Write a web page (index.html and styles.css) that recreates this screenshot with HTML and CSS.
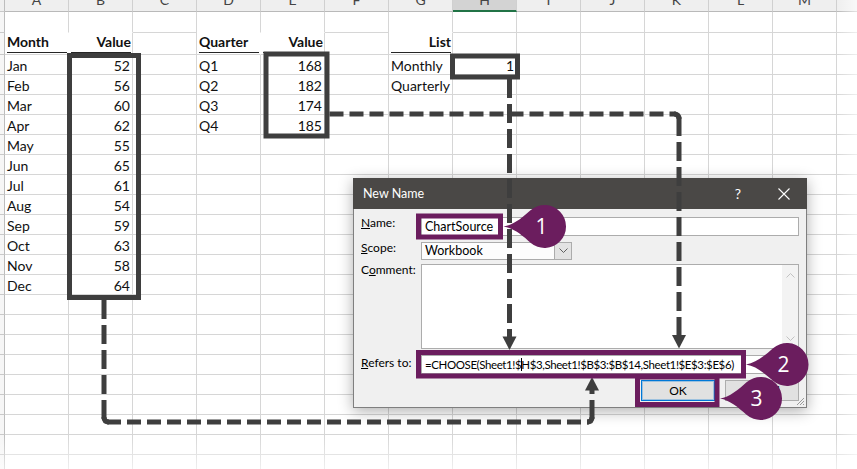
FILE: index.html
```html
<!DOCTYPE html>
<html>
<head>
<meta charset="utf-8">
<title>New Name</title>
<link rel="stylesheet" href="styles.css">
</head>
<body>
<div class="sheet">
  <div class="row hdr"><i class="rh"></i><i>A</i><i>B</i><i>C</i><i>D</i><i>E</i><i>F</i><i>G</i><i class="sel">H</i><i>I</i><i>J</i><i>K</i><i>L</i><i>M</i><i>N</i></div>
  <div class="row r1"><i class="rh"></i><i class="nb"></i><i class="nb"></i><i></i><i class="nb"></i><i class="nb"></i><i></i><i class="nb"></i><i></i><i></i><i></i><i></i><i></i><i></i><i></i></div>
  <div class="row r2"><i class="rh"></i><i class="h nr"><b>Month</b></i><i class="h n"><b>Value</b></i><i></i><i class="h nr"><b>Quarter</b></i><i class="h n"><b>Value</b></i><i></i><i class="h n"><b>List</b></i><i></i><i></i><i></i><i></i><i></i><i></i><i></i></div>
  <div class="row"><i class="rh"></i><i>Jan</i><i class="n">52</i><i></i><i>Q1</i><i class="n">168</i><i></i><i>Monthly</i><i class="n">1</i><i></i><i></i><i></i><i></i><i></i><i></i></div>
  <div class="row"><i class="rh"></i><i>Feb</i><i class="n">56</i><i></i><i>Q2</i><i class="n">182</i><i></i><i>Quarterly</i><i></i><i></i><i></i><i></i><i></i><i></i><i></i></div>
  <div class="row"><i class="rh"></i><i>Mar</i><i class="n">60</i><i></i><i>Q3</i><i class="n">174</i><i></i><i></i><i></i><i></i><i></i><i></i><i></i><i></i><i></i></div>
  <div class="row"><i class="rh"></i><i>Apr</i><i class="n">62</i><i></i><i>Q4</i><i class="n">185</i><i></i><i></i><i></i><i></i><i></i><i></i><i></i><i></i><i></i></div>
  <div class="row"><i class="rh"></i><i>May</i><i class="n">55</i><i></i><i></i><i></i><i></i><i></i><i></i><i></i><i></i><i></i><i></i><i></i><i></i></div>
  <div class="row"><i class="rh"></i><i>Jun</i><i class="n">65</i><i></i><i></i><i></i><i></i><i></i><i></i><i></i><i></i><i></i><i></i><i></i><i></i></div>
  <div class="row"><i class="rh"></i><i>Jul</i><i class="n">61</i><i></i><i></i><i></i><i></i><i></i><i></i><i></i><i></i><i></i><i></i><i></i><i></i></div>
  <div class="row"><i class="rh"></i><i>Aug</i><i class="n">54</i><i></i><i></i><i></i><i></i><i></i><i></i><i></i><i></i><i></i><i></i><i></i><i></i></div>
  <div class="row"><i class="rh"></i><i>Sep</i><i class="n">59</i><i></i><i></i><i></i><i></i><i></i><i></i><i></i><i></i><i></i><i></i><i></i><i></i></div>
  <div class="row"><i class="rh"></i><i>Oct</i><i class="n">63</i><i></i><i></i><i></i><i></i><i></i><i></i><i></i><i></i><i></i><i></i><i></i><i></i></div>
  <div class="row"><i class="rh"></i><i>Nov</i><i class="n">58</i><i></i><i></i><i></i><i></i><i></i><i></i><i></i><i></i><i></i><i></i><i></i><i></i></div>
  <div class="row"><i class="rh"></i><i>Dec</i><i class="n">64</i><i></i><i></i><i></i><i></i><i></i><i></i><i></i><i></i><i></i><i></i><i></i><i></i></div>
  <div class="row"><i class="rh"></i><i></i><i></i><i></i><i></i><i></i><i></i><i></i><i></i><i></i><i></i><i></i><i></i><i></i><i></i></div>
  <div class="row"><i class="rh"></i><i></i><i></i><i></i><i></i><i></i><i></i><i></i><i></i><i></i><i></i><i></i><i></i><i></i><i></i></div>
  <div class="row"><i class="rh"></i><i></i><i></i><i></i><i></i><i></i><i></i><i></i><i></i><i></i><i></i><i></i><i></i><i></i><i></i></div>
  <div class="row"><i class="rh"></i><i></i><i></i><i></i><i></i><i></i><i></i><i></i><i></i><i></i><i></i><i></i><i></i><i></i><i></i></div>
  <div class="row"><i class="rh"></i><i></i><i></i><i></i><i></i><i></i><i></i><i></i><i></i><i></i><i></i><i></i><i></i><i></i><i></i></div>
  <div class="row"><i class="rh"></i><i></i><i></i><i></i><i></i><i></i><i></i><i></i><i></i><i></i><i></i><i></i><i></i><i></i><i></i></div>
  <div class="row"><i class="rh"></i><i></i><i></i><i></i><i></i><i></i><i></i><i></i><i></i><i></i><i></i><i></i><i></i><i></i><i></i></div>
  <div class="row"><i class="rh"></i><i></i><i></i><i></i><i></i><i></i><i></i><i></i><i></i><i></i><i></i><i></i><i></i><i></i><i></i></div>
  <div class="row"><i class="rh"></i><i></i><i></i><i></i><i></i><i></i><i></i><i></i><i></i><i></i><i></i><i></i><i></i><i></i><i></i></div>
  <div class="row"><i class="rh rsel"></i><i></i><i></i><i></i><i></i><i></i><i></i><i></i><i class="active"></i><i></i><i></i><i></i><i></i><i></i><i></i></div>
</div>

<div class="fade-b"></div>
<div class="fade-r"></div>

<div class="dialog">
  <div class="titlebar">
    <span class="title">New Name</span>
    <span class="tbtn">?</span>
    <span class="tbtn"><svg width="12" height="12" viewBox="0 0 12 12"><path d="M0.5 0.5 L11.5 11.5 M11.5 0.5 L0.5 11.5" stroke="#fff" stroke-width="1.1" fill="none"/></svg></span>
  </div>
  <div class="dbody">
    <label class="lbl g1"><u>N</u>ame:</label>
    <div class="input g1">ChartSource</div>
    <label class="lbl g3"><u>S</u>cope:</label>
    <div class="select g3"><span class="sv">Workbook</span><span class="arrow"><svg width="9" height="6" viewBox="0 0 9 6"><path d="M0.5 0.5 L4.5 4.5 L8.5 0.5" stroke="#606060" fill="none"/></svg></span></div>
    <label class="lbl g5">C<u>o</u>mment:</label>
    <div class="textarea g5"><div class="ta"></div><div class="scroll"><svg width="9" height="6" viewBox="0 0 9 6"><path d="M0.5 5.5 L4.5 1.5 L8.5 5.5" stroke="#c2c2c2" fill="none"/></svg><svg width="9" height="6" viewBox="0 0 9 6"><path d="M0.5 0.5 L4.5 4.5 L8.5 0.5" stroke="#c2c2c2" fill="none"/></svg></div></div>
    <label class="lbl g7 lref"><u>R</u>efers to:</label>
    <div class="input g7 formula">=CHOOSE(Sheet1!$<span class="caret"></span>H$3,Sheet1!$B$3:$B$14,Sheet1!$E$3:$E$6)</div>
    <div class="buttons g9"><button class="btn ok">OK</button><button class="btn">Cancel</button></div>
  </div>
  <svg class="grip" width="10" height="10" viewBox="0 0 10 10"><path d="M9 2 L2 9 M9 5 L5 9 M9 8 L8 9" stroke="#9a9a9a" stroke-width="1" fill="none"/></svg>
</div>

<svg class="overlay" width="857" height="469" viewBox="0 0 857 469">
  <g fill="none" stroke="#3e3e3e" stroke-width="5">
    <rect x="69.5" y="55.5" width="69" height="242"/>
    <rect x="266" y="54" width="61" height="82"/>
    <rect x="452.5" y="56" width="65" height="21"/>
  </g>
  <g fill="none" stroke="#3e3e3e" stroke-width="5" stroke-dasharray="19 6">
    <path d="M509.5 79 V337"/>
    <path d="M679 117 V336"/>
    <path d="M104 300 V419"/>
    <path d="M592 419 V390"/>
  </g>
  <g fill="none" stroke="#3e3e3e" stroke-width="5" stroke-dasharray="14 6">
    <path d="M329.5 114 H676"/>
    <path d="M107 422 H589"/>
  </g>
  <g fill="none" stroke="#3e3e3e" stroke-width="5">
    <path d="M674 114 Q679 114 679 119"/>
    <path d="M104 417 Q104 422 109 422"/>
    <path d="M587 422 Q592 422 592 417"/>
  </g>
  <g fill="#3e3e3e">
    <path d="M502.5 336.5 H516.5 L509.5 350 Z"/>
    <path d="M672 335 H686 L679 348.5 Z"/>
    <path d="M585 390.5 H599 L592 377 Z"/>
  </g>
  <g fill="none" stroke="#6b1d5e" stroke-width="5">
    <rect x="418.5" y="216" width="82" height="21"/>
    <rect x="418.5" y="352.5" width="325" height="23.5"/>
    <rect x="637.5" y="377" width="79.5" height="27.5"/>
  </g>
  <g class="callout" transform="translate(544.5 226.5)">
    <path d="M-41 0 C-31 -1.5 -22 -9 -14 -16.3 A21.5 21.5 0 1 1 -14 16.3 C-22 9 -31 1.5 -41 0 Z"/>
    <text x="-3" y="7.5">1</text>
  </g>
  <g class="callout" transform="translate(787 364.5)">
    <path d="M-41 0 C-31 -1.5 -22 -9 -14 -16.3 A21.5 21.5 0 1 1 -14 16.3 C-22 9 -31 1.5 -41 0 Z"/>
    <text x="-3.5" y="7.5">2</text>
  </g>
  <g class="callout" transform="translate(760.5 398.5)">
    <path d="M-40.5 0 C-31 -1.5 -22 -9 -14 -16.3 A21.5 21.5 0 1 1 -14 16.3 C-22 9 -31 1.5 -40.5 0 Z"/>
    <text x="-4" y="7.5">3</text>
  </g>
</svg>
</body>
</html>
```

FILE: styles.css
```css
html, body {
  margin: 0;
  padding: 0;
}
body {
  width: 857px;
  height: 469px;
  overflow: hidden;
  position: relative;
  background: #fff;
  font-family: Lato, "Liberation Sans", sans-serif;
  color: #111;
}

/* ---------- spreadsheet grid ---------- */
.sheet {
  display: flex;
  flex-direction: column;
}
.row {
  display: grid;
  grid-template-columns: 5px repeat(14, 64px);
  height: 20px;
}
.row > i {
  font-style: normal;
  box-sizing: border-box;
  border-right: 1px solid #d6d6d6;
  border-bottom: 1px solid #d6d6d6;
  padding: 0 2px;
  display: flex;
  align-items: flex-end;
  font-size: 14px;
  line-height: 16px;
  white-space: nowrap;
  overflow: hidden;
}
.row > i.n { justify-content: flex-end; }
.row > i.nb { border-bottom-color: transparent; }
.row > i.nr { border-right-color: transparent; }

.row > i.rh {
  padding: 0;
  background: #f6f6f6;
  border-right: 1px solid #bdbdbd;
  border-bottom: 1px solid #c9c9c9;
}
.row > i.rsel {
  background: #d2d2d2;
  border-right: 2px solid #217346;
}
.row > i.active {
  outline: 2px solid #217346;
  outline-offset: 0;
}

/* column header row (mostly scrolled above the view) */
.hdr { height: 12px; }
.hdr > i {
  background: #efefef;
  color: #444;
  justify-content: center;
  padding: 0 0 3px;
  border-right-color: #d0d0d0;
  border-bottom-color: #b9b9b9;
}
.hdr > i.sel {
  background: #d3d3d3;
  border-bottom: 2px solid #217346;
  padding-bottom: 2px;
}
.hdr > i.rh {
  background: #efefef;
}

.r1 { height: 21px; }
.r2 { height: 22px; }
.row > i.h {
  padding: 0 1px 0 2px;
}
.row > i.h b {
  flex: 1;
  display: block;
  font-weight: 700;
  border-bottom: 1px solid #262626;
  margin-bottom: 1px;
  padding-bottom: 2px;
  line-height: 16px;
}
.row > i.h.n b { text-align: right; }

/* soft edge of the capture */
.fade-b {
  position: absolute;
  left: 0;
  right: 0;
  bottom: 0;
  height: 34px;
  background: linear-gradient(to bottom, rgba(255,255,255,0), rgba(255,255,255,0.6));
}
.fade-r {
  position: absolute;
  top: 0;
  bottom: 0;
  right: 0;
  width: 20px;
  background: linear-gradient(to right, rgba(255,255,255,0), rgba(255,255,255,0.6));
}

/* ---------- dialog ---------- */
.dialog {
  position: absolute;
  left: 353px;
  top: 178px;
  width: 454px;
  height: 230px;
  box-sizing: border-box;
  background: #f0f0f0;
  border: 1px solid #7f7f7f;
  border-top: 0;
  box-shadow: 0 3px 14px rgba(0, 0, 0, 0.32);
  font-size: 12px;
  color: #000;
}
.titlebar {
  height: 31px;
  margin: 0 -1px;
  background: #4a4846;
  color: #fff;
  display: flex;
  align-items: center;
}
.title {
  flex: 1;
  padding-left: 10px;
  font-size: 12.5px;
}
.tbtn {
  width: 46px;
  height: 31px;
  display: flex;
  align-items: center;
  justify-content: center;
  font-size: 14px;
}
.dbody {
  display: grid;
  grid-template-columns: 60px 378px;
  grid-template-rows: 19px 6px 18px 4px 85px 6px 19px 6px 21px;
  padding: 8px 7px 0;
}
.g1 { grid-row: 1; }
.g3 { grid-row: 3; }
.g5 { grid-row: 5; }
.g7 { grid-row: 7; }
.g9 { grid-row: 9; grid-column: 1 / -1; }

.lbl {
  grid-column: 1;
  align-self: start;
  margin-top: -1px;
  line-height: 14px;
  font-size: 12px;
}
.lref { margin-top: 1px; }

.input {
  grid-column: 2;
  box-sizing: border-box;
  background: #fff;
  border: 1px solid #acacac;
  padding: 0 3px;
  line-height: 17px;
  font-size: 12.5px;
  white-space: nowrap;
  overflow: hidden;
}
.formula {
  font-size: 11.5px;
  letter-spacing: -0.4px;
  line-height: 17px;
  padding-left: 3px;
}
.caret {
  display: inline-block;
  width: 1px;
  height: 13px;
  background: #000;
  vertical-align: -2px;
  margin-right: -1px;
}
.select {
  grid-column: 2;
  width: 151px;
  box-sizing: border-box;
  background: #fdfdfd;
  border: 1px solid #acacac;
  display: flex;
  align-items: stretch;
}
.sv {
  flex: 1;
  padding-left: 3px;
  line-height: 16px;
  font-size: 12.5px;
}
.arrow {
  width: 16px;
  background: #e3e3e3;
  border-left: 1px solid #acacac;
  display: flex;
  align-items: center;
  justify-content: center;
}
.textarea {
  grid-column: 2;
  box-sizing: border-box;
  background: #fff;
  border: 1px solid #acacac;
  display: flex;
}
.ta { flex: 1; }
.scroll {
  width: 16px;
  background: #f3f3f3;
  display: flex;
  flex-direction: column;
  justify-content: space-between;
  align-items: center;
  padding: 7px 0 6px;
}
.buttons {
  display: flex;
  justify-content: flex-end;
  gap: 10px;
}
.btn {
  width: 74px;
  height: 21px;
  box-sizing: border-box;
  margin: 0;
  padding: 0;
  background: #e1e1e1;
  border: 1px solid #adadad;
  font-family: Lato, "Liberation Sans", sans-serif;
  font-size: 12px;
  color: #000;
}
.btn.ok {
  border-color: #0078d7;
  box-shadow: inset 0 0 0 1px rgba(0, 120, 215, 0.3);
}
.grip {
  position: absolute;
  right: 1px;
  bottom: 1px;
}

/* ---------- annotations ---------- */
.overlay {
  position: absolute;
  left: 0;
  top: 0;
}
.callout path { fill: #6b1d5e; }
.callout text {
  fill: #fff;
  font-family: "Open Sans", Lato, sans-serif;
  font-size: 21px;
  text-anchor: middle;
}
```
